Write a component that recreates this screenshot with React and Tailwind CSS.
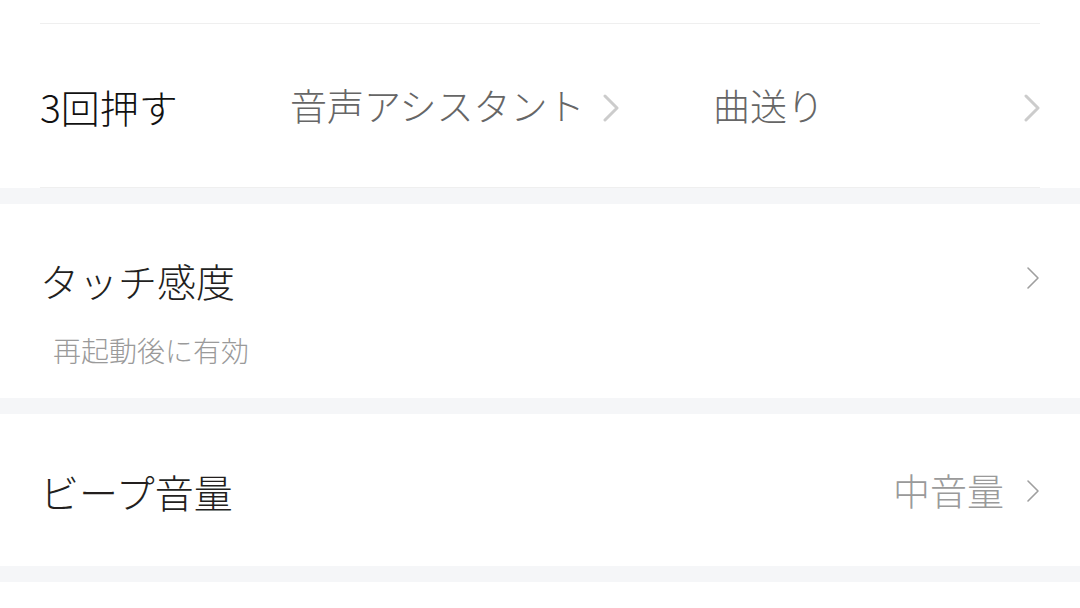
import React from 'react'

const font = { fontFamily: '"Noto Sans CJK JP", "Noto Sans", sans-serif' }

function Chevron({ bold }) {
  if (bold) {
    return (
      <svg width="16" height="28" viewBox="0 0 16 28" className="shrink-0">
        <polyline points="2,2 14,14 2,26" fill="none" stroke="#cccccc" strokeWidth="3" strokeLinecap="round" strokeLinejoin="round" />
      </svg>
    )
  }
  return (
    <svg width="14" height="24" viewBox="0 0 14 24" className="shrink-0">
      <polyline points="2,2 12,12 2,22" fill="none" stroke="#9f9f9f" strokeWidth="1.6" strokeLinecap="round" strokeLinejoin="round" />
    </svg>
  )
}

function Band() {
  return <div className="h-4 bg-[#f5f6f8]" />
}

export default function App() {
  return (
    <div className="w-[1080px] h-[608px] bg-white overflow-hidden font-light" style={font}>
      {/* previous row tail */}
      <div className="h-6 px-10">
        <div className="h-full border-b border-[#efefef]" />
      </div>

      {/* 3回押す */}
      <div className="px-10">
        <div className="h-[164px] flex items-center border-b border-[#efefef] pt-[1px]">
          <span className="w-[250px] text-[39px] text-[#111]">3回押す</span>
          <div className="w-[423px] flex items-center">
            <span className="text-[37px] text-[#666]">音声アシスタント</span>
            <span className="ml-[18px] pt-1"><Chevron bold /></span>
          </div>
          <span className="flex-1 text-[37px] text-[#666]">曲送り</span>
          <span className="pt-1"><Chevron bold /></span>
        </div>
      </div>
      <Band />

      {/* タッチ感度 */}
      <div className="h-[194px] px-10 pt-[50px]">
        <div className="flex items-center justify-between">
          <span className="text-[39px] leading-[52px] text-[#231f1e]">タッチ感度</span>
          <span className="-mt-1"><Chevron /></span>
        </div>
        <div className="mt-[24px] pl-[13px] text-[28px] leading-[40px] text-[#9a9a9a]">再起動後に有効</div>
      </div>
      <Band />

      {/* ビープ音量 */}
      <div className="h-[152px] px-10 flex items-center pt-[2px]">
        <span className="flex-1 text-[39px] text-[#231f1e]">ビープ音量</span>
        <span className="text-[37px] text-[#9a9a9a]">中音量</span>
        <span className="ml-[22px]"><Chevron /></span>
      </div>
      <Band />
    </div>
  )
}
